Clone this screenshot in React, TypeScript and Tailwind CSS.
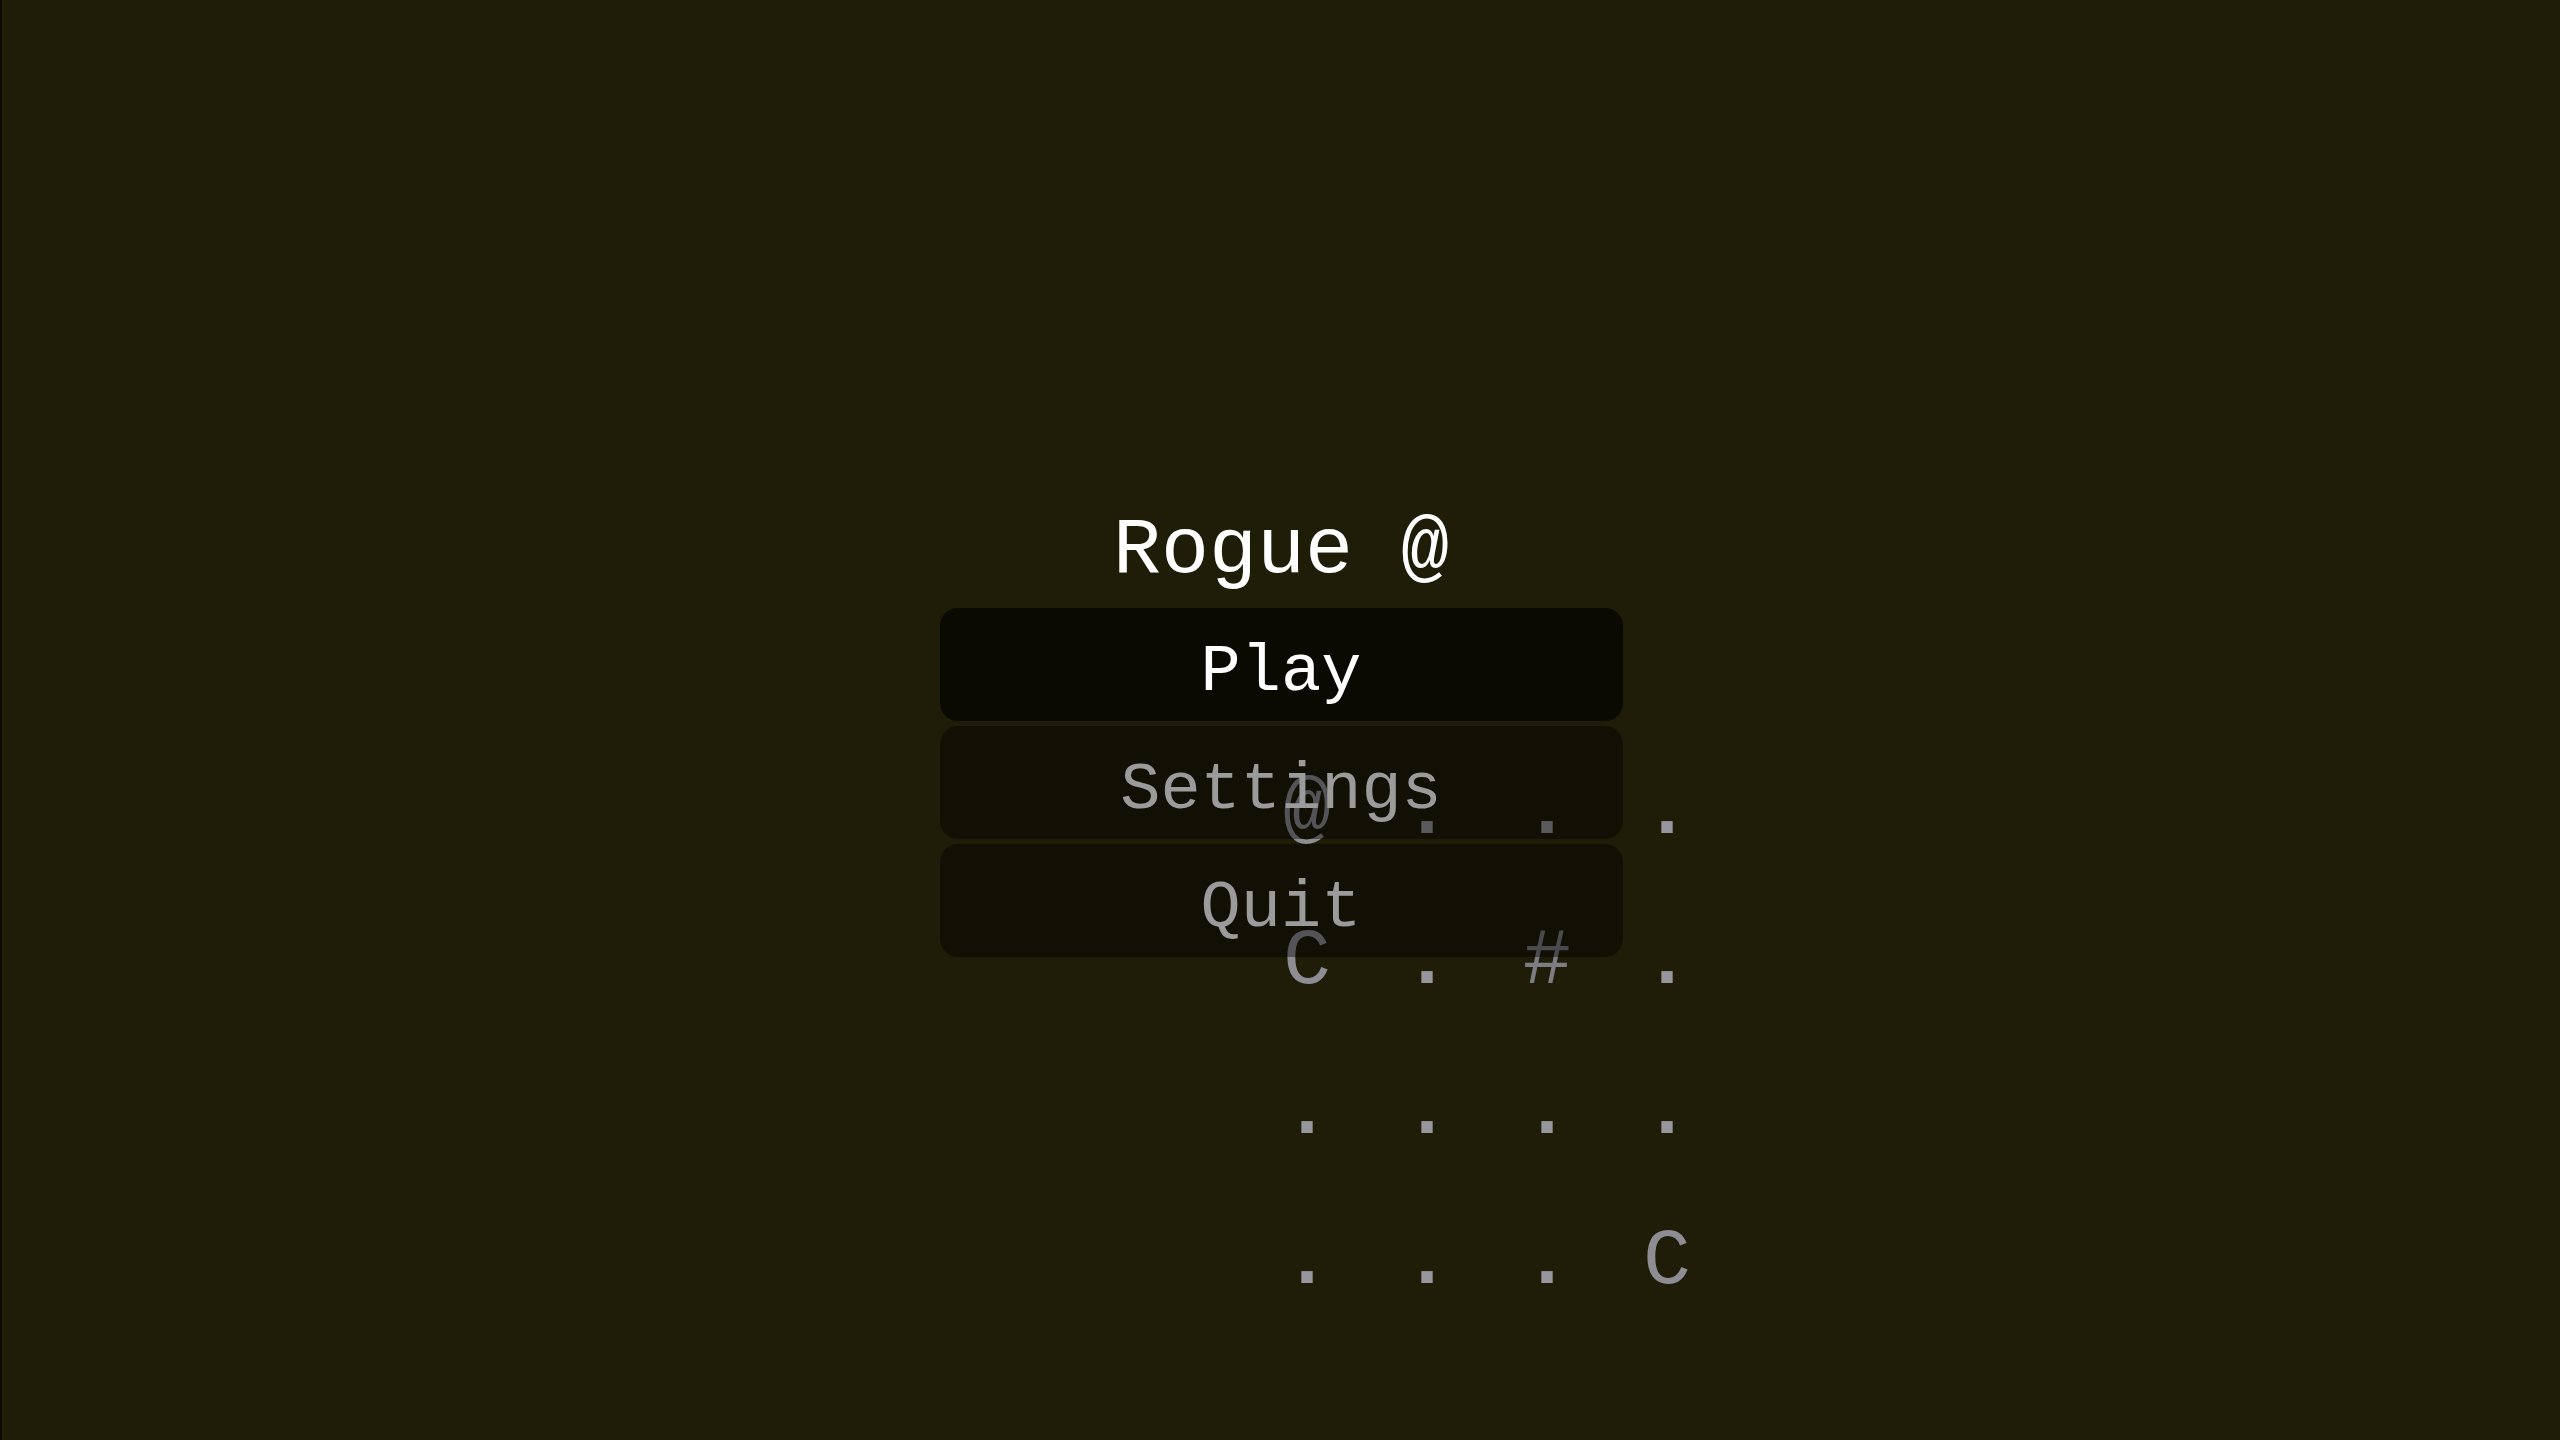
const MAP = [
  ["@", ".", ".", "."],
  ["C", ".", "#", "."],
  [".", ".", ".", "."],
  [".", ".", ".", "C"],
];

const ITEMS = [
  { label: "Play", active: true },
  { label: "Settings", active: false },
  { label: "Quit", active: false },
];

export default function App() {
  return (
    <div className="relative h-screen w-full overflow-hidden border-l-2 border-[#0c0b02] bg-[#1f1c07] font-['Liberation_Mono','DejaVu_Sans_Mono',monospace]">
      {/* map drawn behind the menu */}
      <div className="absolute left-[1245px] top-[737px] grid grid-cols-[repeat(4,120px)] grid-rows-[repeat(4,150px)]">
        {MAP.flat().map((ch, i) => (
          <span
            key={i}
            className={
              "text-center text-[80px] leading-[150px] " +
              (ch === "#"
                ? "text-[#7c7c82]"
                : ch === "."
                ? "font-bold text-[#96969c]"
                : "text-[#8d8d93]")
            }
          >
            {ch}
          </span>
        ))}
      </div>

      {/* menu */}
      <div className="relative flex flex-col items-center pt-[511px]">
        <h1 className="text-[80px] leading-[80px] text-white">Rogue @</h1>
        <div className="mt-[17px] flex w-[683px] flex-col gap-[5px]">
          {ITEMS.map((item) => (
            <button
              key={item.label}
              className={
                "h-[113px] rounded-[18px] pt-[16px] text-center text-[67px] leading-[97px] " +
                (item.active ? "bg-black/65 text-white" : "bg-black/40 text-[#9b9b9b]")
              }
            >
              {item.label}
            </button>
          ))}
        </div>
      </div>
    </div>
  );
}
